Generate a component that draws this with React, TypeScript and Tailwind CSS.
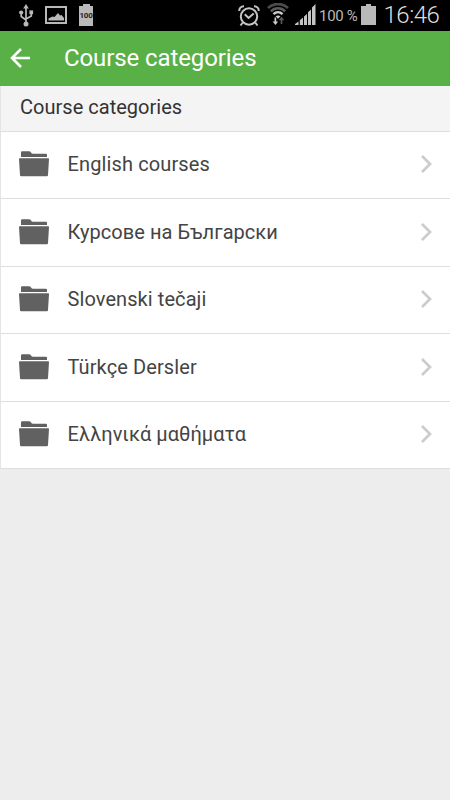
interface Category {
  id: number;
  name: string;
  spacing: string;
}

const CATEGORIES: Category[] = [
  { id: 1, name: "English courses", spacing: "tracking-[0.12px]" },
  { id: 2, name: "Курсове на Български", spacing: "tracking-[0.05px]" },
  { id: 3, name: "Slovenski tečaji", spacing: "tracking-[0.08px]" },
  { id: 4, name: "Türkçe Dersler", spacing: "tracking-[0.1px]" },
  { id: 5, name: "Ελληνικά μαθήματα", spacing: "tracking-[0.03px]" },
];

function UsbIcon() {
  return (
    <svg width="16" height="24" viewBox="0 0 16 24" fill="none" stroke="#b9b9b9" strokeWidth="1.7">
      <path d="M8 4v17M3.200 10v3.500l4.800 3.500M13.300 10v3l-5.300 3" />
      <path d="M8 1l2.800 4.500H5.200z" fill="#b9b9b9" stroke="none" />
      <circle cx="3.200" cy="9.500" r="2.100" fill="#b9b9b9" stroke="none" />
      <path d="M11.400 7.400h3.700v3.800h-3.700z" fill="#b9b9b9" stroke="none" />
      <circle cx="8" cy="21" r="2.500" fill="#b9b9b9" stroke="none" />
    </svg>
  );
}

function PictureIcon() {
  return (
    <svg width="22" height="18" viewBox="0 0 22 18">
      <path d="M1 1h20v16H1z" fill="none" stroke="#b9b9b9" strokeWidth="2" />
      <path d="M3.500 14.500v-2l4-2 2 .5 3.500-4 2 2.500 1.500-.5 2.500 3v2.500z" fill="#b9b9b9" />
    </svg>
  );
}

function AlarmIcon() {
  return (
    <svg width="22" height="22" viewBox="0 0 22 22" fill="none" stroke="#c4c4c4" strokeWidth="2">
      <circle cx="11" cy="11.500" r="8.200" />
      <path d="M6.800 9.300l3.700 3.700 5.200-4.500M1.300 6C1 3.500 3 1.200 6 1.300M20.700 6C21 3.500 19 1.200 16 1.300M4.800 17.500l-2.300 3M17.200 17.500l2.300 3" />
    </svg>
  );
}

function WifiIcon() {
  return (
    <svg width="22" height="23" viewBox="0 0 22 23" fill="none">
      <path d="M1 5C6.500 -.3 15.500 -.3 21 5" stroke="#4b4b4b" strokeWidth="2.700" />
      <path d="M3.800 8.300c4-4 10.400-4 14.400 0" stroke="#5b5b5b" strokeWidth="2.500" />
      <path d="M6.500 11.200c2.600-2.600 6.400-2.600 9 0" stroke="#cccccc" strokeWidth="2.500" />
      <path d="M8.500 13.200q2.500-1.500 5 0L11 15.800z" fill="#cccccc" />
      <path d="M7.500 14.500v4H5.600L8.500 22l2.600-3.500H9.200v-4z" fill="#cccccc" />
      <path d="M13.700 21v-3.800h-2l2.800-3.500 2.800 3.500h-2V21z" fill="#5a5a5a" />
    </svg>
  );
}

function SignalIcon() {
  return (
    <svg width="21" height="21" viewBox="0 0 21 21" fill="#c4c4c4">
      <path d="M0 21v-1l3.500-2.500V21zM4.800 21v-4.800L8 13.500V21zM9 21v-8.500l3-2.500v11zM13 21V8.200L16 5.500V21zM17 21V3.500L20.500 0v21z" />
    </svg>
  );
}

function StatusBar() {
  return (
    <div className="flex h-[31px] bg-black pl-[18px] text-[#b9b9b9]">
      <div className="mt-[3px] w-[27px]"><UsbIcon /></div>
      <div className="mt-[6px] w-[34px]"><PictureIcon /></div>
      <div className="mt-[4px] w-[14px]">
        <div className="mx-auto h-[2px] w-[7px] bg-[#b9b9b9]" />
        <div className="flex h-[20px] w-[14px] items-center justify-center bg-[#b9b9b9] text-[8px] leading-none font-bold tracking-[-0.3px] text-[#222222]">
          100
        </div>
      </div>
      <div className="mt-[5px] ml-[145px] w-[29px]"><AlarmIcon /></div>
      <div className="mt-[3px] w-[28px]"><WifiIcon /></div>
      <div className="mt-[4px] w-[24px]"><SignalIcon /></div>
      <div className="w-[42px] pt-[1px] text-[15px] leading-[30px] tracking-[-0.3px] whitespace-nowrap">100 %</div>
      <div className="mt-[4px] w-[15px]">
        <div className="mx-auto h-[2px] w-[5px] bg-[#b9b9b9]" />
        <div className="h-[19px] w-[15px] bg-[#b9b9b9]" />
      </div>
      <div className="ml-[7.5px] text-[24px] leading-[30px] font-light tracking-[-0.5px] whitespace-nowrap text-[#dddddd]">
        16:46
      </div>
    </div>
  );
}

function FolderIcon() {
  return (
    <svg width="30" height="26" viewBox="0 0 30 26" fill="#616161">
      <path d="M2 6V1.500Q2 .3 3.200.3H10Q11.300.3 12 1.400T14 2.700H27Q28 2.700 28 3.700V6z" />
      <path d="M.8 7.300H29.200Q30 7.300 30 8.100L29 24.200Q28.900 25.300 27.800 25.300H2.200Q1.100 25.300 1 24.200L0 8.100Q0 7.300.8 7.300z" />
    </svg>
  );
}

function CategoryRow({ category }: { category: Category }) {
  return (
    <li className="flex h-[67.5px] items-center border-b border-[#dedede] pr-[18px] pb-[1.5px] pl-[18px]">
      <FolderIcon />
      <span className={`ml-[18.5px] flex-1 text-[20px] leading-[30px] text-[#444444] ${category.spacing}`}>
        {category.name}
      </span>
      <svg width="12" height="20" viewBox="0 0 12 20" fill="none" stroke="#cccccc" strokeWidth="2.700">
        <path d="M2 2l8 8-8 8" />
      </svg>
    </li>
  );
}

export default function App() {
  return (
    <div className="h-[800px] w-[450px] overflow-hidden bg-[#ededed] font-['Roboto',sans-serif]">
      <StatusBar />
      <header className="flex h-[55px] items-center bg-[#58b047] pb-px pl-[10px] text-white">
        <svg width="20" height="20" viewBox="0 0 20 20" fill="none" stroke="white" strokeWidth="2.600">
          <path d="M11 1L2 10l9 9M2 10h18" />
        </svg>
        <h1 className="ml-[34px] text-[24px] leading-[36px] tracking-[-0.1px]">Course categories</h1>
      </header>
      <main className="border-l border-[#e4e4e4] bg-white">
        <h2 className="h-[45.500px] border-b border-[#dedede] bg-[#f4f4f4] pl-[19px] text-[20px] leading-[42px] tracking-[0.02px] text-[#333333]">
          Course categories
        </h2>
        <ul>
          {CATEGORIES.map((c) => (
            <CategoryRow key={c.id} category={c} />
          ))}
        </ul>
      </main>
    </div>
  );
}
